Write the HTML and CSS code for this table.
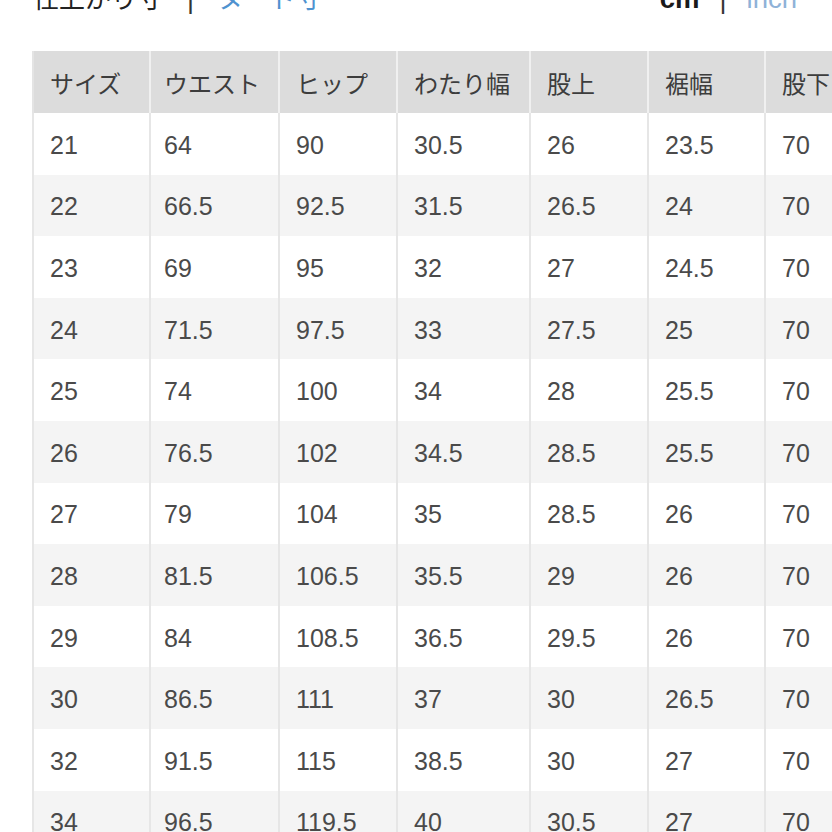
FILE: index.html
```html
<!DOCTYPE html>
<html lang="ja">
<head>
<meta charset="utf-8">
<link rel="stylesheet" href="styles.css">
</head>
<body>
<div class="page">
  <div class="topbar">
    <div class="tabs">
      <span class="tab active">仕上がり寸</span>
      <span class="sep">|</span>
      <span class="tab link">ヌード寸</span>
    </div>
    <div class="units">
      <span class="unit active">cm</span>
      <span class="sep">|</span>
      <span class="unit link">inch</span>
    </div>
  </div>
  <table class="chart">
    <colgroup>
      <col class="c1"><col class="c2"><col class="c3"><col class="c4"><col class="c5"><col class="c6"><col class="c7">
    </colgroup>
    <thead>
      <tr><th>サイズ</th><th>ウエスト</th><th>ヒップ</th><th>わたり幅</th><th>股上</th><th>裾幅</th><th>股下</th></tr>
    </thead>
    <tbody>
      <tr><td>21</td><td>64</td><td>90</td><td>30.5</td><td>26</td><td>23.5</td><td>70</td></tr>
      <tr><td>22</td><td>66.5</td><td>92.5</td><td>31.5</td><td>26.5</td><td>24</td><td>70</td></tr>
      <tr><td>23</td><td>69</td><td>95</td><td>32</td><td>27</td><td>24.5</td><td>70</td></tr>
      <tr><td>24</td><td>71.5</td><td>97.5</td><td>33</td><td>27.5</td><td>25</td><td>70</td></tr>
      <tr><td>25</td><td>74</td><td>100</td><td>34</td><td>28</td><td>25.5</td><td>70</td></tr>
      <tr><td>26</td><td>76.5</td><td>102</td><td>34.5</td><td>28.5</td><td>25.5</td><td>70</td></tr>
      <tr><td>27</td><td>79</td><td>104</td><td>35</td><td>28.5</td><td>26</td><td>70</td></tr>
      <tr><td>28</td><td>81.5</td><td>106.5</td><td>35.5</td><td>29</td><td>26</td><td>70</td></tr>
      <tr><td>29</td><td>84</td><td>108.5</td><td>36.5</td><td>29.5</td><td>26</td><td>70</td></tr>
      <tr><td>30</td><td>86.5</td><td>111</td><td>37</td><td>30</td><td>26.5</td><td>70</td></tr>
      <tr><td>32</td><td>91.5</td><td>115</td><td>38.5</td><td>30</td><td>27</td><td>70</td></tr>
      <tr><td>34</td><td>96.5</td><td>119.5</td><td>40</td><td>30.5</td><td>27</td><td>70</td></tr>
    </tbody>
  </table>
</div>
</body>
</html>
```

FILE: styles.css
```css
html, body {
  margin: 0;
  padding: 0;
  background: #ffffff;
  overflow: hidden;
}
body {
  width: 832px;
  height: 832px;
  font-family: "Liberation Sans", "Noto Sans CJK JP", sans-serif;
}
.page {
  padding-left: 33px;
}
.topbar {
  display: flex;
  justify-content: space-between;
  align-items: flex-end;
  margin-top: -15px;
  height: 28px;
  padding-right: 35px;
  line-height: 28px;
}
.tabs, .units {
  display: flex;
  align-items: baseline;
}
.tabs {
  gap: 24px;
}
.units {
  gap: 20px;
}
.tab {
  font-size: 26px;
  color: #222222;
}
.tab.link {
  color: #4f92cf;
}
.sep {
  font-size: 27px;
  color: #333333;
}
.unit {
  font-size: 27.5px;
}
.unit.active {
  font-weight: bold;
  color: #1a1a1a;
}
.unit.link {
  color: #8fb2d8;
}
.chart {
  margin-top: 38px;
  margin-left: -1px;
  border-collapse: collapse;
  table-layout: fixed;
  width: 850px;
}
.c1 { width: 117px; }
.c2 { width: 129px; }
.c3 { width: 118px; }
.c4 { width: 133px; }
.c5 { width: 118px; }
.c6 { width: 117px; }
.c7 { width: 118px; }
.chart th, .chart td {
  text-align: left;
  padding: 0 0 0 16px;
  white-space: nowrap;
  overflow: hidden;
  font-weight: normal;
}
.chart th:nth-child(2), .chart td:nth-child(2) {
  padding-left: 13px;
}
.chart th {
  height: 62px;
  font-size: 24px;
  background: #dcdcdc;
  color: #3d3d3d;
  border-left: 2px solid #f0f0f0;
  border-right: 2px solid #f0f0f0;
}
.chart th:first-child {
  border-left-color: #e4e4e4;
}
.chart td {
  height: 58.6px;
  padding-top: 3px;
  font-size: 25px;
  color: #4a4a4a;
  border-left: 2px solid #e6e6e6;
  border-right: 2px solid #e6e6e6;
}
.chart tbody tr:nth-child(even) td {
  background: #f4f4f4;
}
```
